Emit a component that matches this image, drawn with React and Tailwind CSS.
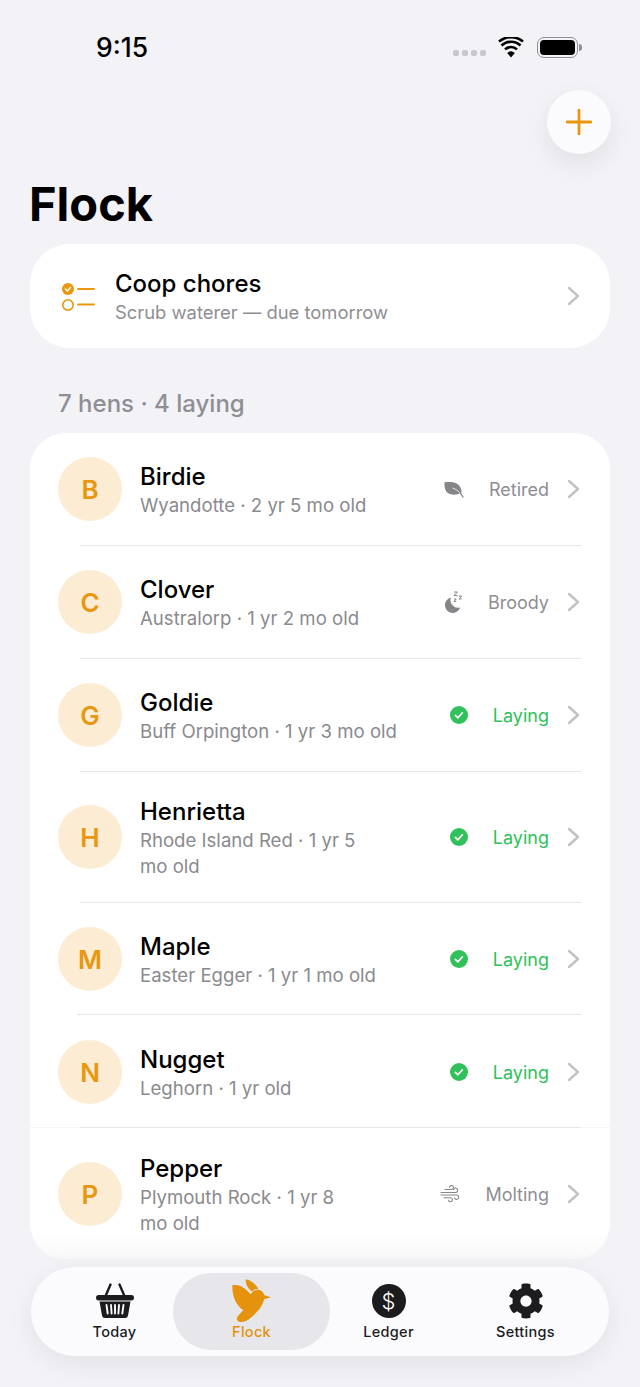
import React from 'react';
import { FaCog } from 'react-icons/fa';

const hens = [
  { name: 'Birdie', meta: 'Wyandotte · 2 yr 5 mo old', status: 'Retired' },
  { name: 'Clover', meta: 'Australorp · 1 yr 2 mo old', status: 'Broody' },
  { name: 'Goldie', meta: 'Buff Orpington · 1 yr 3 mo old', status: 'Laying' },
  { name: 'Henrietta', meta: 'Rhode Island Red · 1 yr 5 mo\u00a0old', status: 'Laying' },
  { name: 'Maple', meta: 'Easter Egger · 1 yr 1 mo old', status: 'Laying' },
  { name: 'Nugget', meta: 'Leghorn · 1 yr old', status: 'Laying' },
  { name: 'Pepper', meta: 'Plymouth Rock · 1 yr 8 mo\u00a0old', status: 'Molting' },
];

function Chevron() {
  return (
    <svg width="13" height="20" viewBox="0 0 13 20" className="shrink-0">
      <path d="M2 2l9 8-9 8" fill="none" stroke="#c2c2c6" strokeWidth="2.4" strokeLinecap="round" strokeLinejoin="round" />
    </svg>
  );
}

function StatusIcon({ status }) {
  if (status === 'Laying') {
    return (
      <svg width="18" height="18" viewBox="0 0 18 18">
        <circle cx="9" cy="9" r="9" fill="#30c15a" />
        <path d="M5.4 9.3l2.5 2.5 4.5-5" fill="none" stroke="#fff" strokeWidth="1.7" strokeLinecap="round" strokeLinejoin="round" />
      </svg>
    );
  }
  if (status === 'Retired') {
    return (
      <svg width="20" height="17" viewBox="0 0 20 17">
        <path d="M.6 1.200C6 .6 14.500 0 17 8c.5 1.500 .5 2.800 .3 4C12 14.500 2.800 15 1 7.500 .4 5 .4 3 .6 1.200z" fill="#858589" />
        <path d="M8.500 7c3.500 1 6.500 3.500 8.500 6.500" fill="none" stroke="#fff" strokeWidth=".8" />
        <path d="M16.500 12l2.500 4" fill="none" stroke="#858589" strokeWidth="1.400" strokeLinecap="round" />
      </svg>
    );
  }
  if (status === 'Broody') {
    return (
      <svg width="20" height="22" viewBox="0 0 20 22" fill="#858589">
        <path d="M8 6.500a7.600 7.600 0 0 0 9.200 10A7.800 7.800 0 1 1 8 6.500z" />
        <path d="M11 1h3.400L11 4.600h3.400M16 5h2.800L16 8h2.800M11 8h2.200L11 10.400h2.200" fill="none" stroke="#858589" strokeWidth="1" />
      </svg>
    );
  }
  return (
    <svg width="20" height="18" viewBox="0 0 20 18" fill="none" stroke="#858589" strokeWidth="1.100" strokeLinecap="round">
      <path d="M5 4.500h6.500a2 2 0 1 0-2-2.300" />
      <path d="M1 7.500h14.500a2.200 2.200 0 1 0-2-3" />
      <path d="M1 10h15.500a2.200 2.200 0 1 1-2 3" />
      <path d="M4 12.800h6.500a2 2 0 1 1-2 2.400" />
    </svg>
  );
}

function HenRow({ hen }) {
  const laying = hen.status === 'Laying';
  return (
    <div className="flex items-center py-6 pl-[28px] pr-[30px]">
      <div className="flex h-16 w-16 shrink-0 items-center justify-center rounded-full bg-[#fcecd3] text-[26px] font-semibold text-[#e8970f]">
        {hen.name[0]}
      </div>
      <div className="ml-[18px] min-w-0 flex-1 translate-y-px pr-[50px]">
        <div className="text-[24px] leading-[30px] font-medium text-black">{hen.name}</div>
        <div className="text-[18.6px] leading-[26px] text-[#8a8a8e]">{hen.meta}</div>
      </div>
      <StatusIcon status={hen.status} />
      <span className={`ml-[25px] text-[18px] ${laying ? 'text-[#30c15a]' : 'text-[#8e8e93]'}`}>
        {hen.status}
      </span>
      <div className="ml-[18px] flex">
        <Chevron />
      </div>
    </div>
  );
}

function TabLabel({ children, active }) {
  return (
    <span className={`mt-1 text-[14.5px] leading-[18px] font-medium tracking-[0.3px] ${active ? 'text-[#e5920d]' : 'text-[#1c1c1e]'}`}>
      {children}
    </span>
  );
}

export default function App() {
  return (
    <div className="h-[1387px] w-[640px] overflow-hidden bg-[#f2f2f7] font-['Inter',sans-serif]">
      {/* Status bar */}
      <div className="flex h-[90px] items-start justify-between pt-[31px] pl-[96px] pr-[58px]">
        <span className="text-[26.5px] leading-8 font-medium text-black">9:15</span>
        <div className="flex items-center pt-[6px]">
          <div className="mt-[10px] mr-[12px] flex gap-[3px]">
            {[0, 1, 2, 3].map((i) => (
              <div key={i} className="h-[6px] w-[6px] rounded-[2px] bg-[#c8c8cc]" />
            ))}
          </div>
          <svg width="26" height="21" viewBox="0 0 26 21" className="mr-[13px]">
            <path d="M13 20.500l-3.800-4.600a6 6 0 0 1 7.600 0z" fill="#000" />
            <path d="M3.500 9.500a14 14 0 0 1 19 0M7 13.400a8.800 8.800 0 0 1 12 0M1 5.600a18.500 18.500 0 0 1 24 0" fill="none" stroke="#000" strokeWidth="2.600" transform="translate(0 -1)" />
          </svg>
          <div className="flex items-center">
            <div className="h-[21px] w-[41px] rounded-[7px] border-[1.5px] border-[#8e8e93] p-[2px]">
              <div className="h-full w-full rounded-[4px] bg-black" />
            </div>
            <div className="ml-[1px] h-[7px] w-[3px] rounded-r-sm bg-[#8e8e93]" />
          </div>
        </div>
      </div>

      {/* Add button */}
      <div className="flex justify-end pr-[29px]">
        <button className="flex h-16 w-16 items-center justify-center rounded-full bg-[#fbfbfd] shadow-[0_10px_28px_rgba(0,0,0,0.08)]">
          <svg width="26" height="26" viewBox="0 0 26 26">
            <path d="M13 1v24M1 13h24" stroke="#e8970f" strokeWidth="2.800" strokeLinecap="round" />
          </svg>
        </button>
      </div>

      <h1 className="mt-[23px] mb-[13px] pl-[29px] text-[47px] leading-[54px] font-bold text-black">Flock</h1>

      {/* Chores card */}
      <div className="mx-[30px] flex h-[104px] items-center rounded-[40px] bg-white pl-[31px] pr-[30px]">
        <svg width="36" height="30" viewBox="0 0 36 30" className="shrink-0">
          <circle cx="7" cy="8" r="6" fill="#e8970f" />
          <path d="M4.400 8l2 2 3.200-3.600" fill="none" stroke="#fff" strokeWidth="1.400" strokeLinecap="round" strokeLinejoin="round" />
          <circle cx="7" cy="24" r="5.200" fill="none" stroke="#e8970f" strokeWidth="1.600" />
          <path d="M17 8h16M17 23.500h16" stroke="#e8970f" strokeWidth="1.800" strokeLinecap="round" />
        </svg>
        <div className="ml-[18px] flex-1 translate-y-px">
          <div className="text-[24px] leading-[30px] font-medium text-black">Coop chores</div>
          <div className="mt-px text-[18.4px] leading-[25px] text-[#8e8e93]">Scrub waterer — due tomorrow</div>
        </div>
        <Chevron />
      </div>

      <div className="mt-10 mb-[13px] pl-[58px] text-[24px] leading-8 font-medium text-[#8e8e93]">7 hens · 4 laying</div>

      {/* Hen list */}
      <div className="mx-[30px] rounded-[36px] bg-white">
        {hens.map((hen, i) => (
          <div key={hen.name} className={i === hens.length - 1 ? 'rounded-b-[36px] bg-gradient-to-b from-white from-80% to-[#f8f8fa]' : ''}>
            <HenRow hen={hen} />
            {hen.name === 'Nugget' && (
              <div className="h-px -translate-y-px bg-[#f6f6f8] pr-[29px] pl-[50px]">
                <div className="h-px bg-[#e6e6ea]" />
              </div>
            )}
            {hen.name === 'Maple' && <div className="mr-[29px] ml-[47px] h-px -translate-y-px bg-[#e6e6ea]" />}
            {i < 4 && <div className="mr-[29px] ml-[50px] h-px bg-[#e6e6ea]" />}
          </div>
        ))}
      </div>

      {/* Tab bar */}
      <div className="mx-[31px] mt-2 grid h-[89px] grid-cols-4 items-start rounded-[44px] bg-[#fbfbfe] px-[15px] pt-[6px] shadow-[0_8px_30px_rgba(0,0,0,0.07)]">
        <div className="flex flex-col items-center pt-[10px]">
          <svg width="38" height="36" viewBox="0 0 38 36" fill="#1c1c1e">
            <path d="M10 12L14.500 1.500M28 12L23.500 1.500" stroke="#1c1c1e" strokeWidth="2.400" strokeLinecap="round" />
            <rect x="0" y="12" width="38" height="5.500" rx="2.700" />
            <path d="M3.500 18.500h31l-2.500 14a3 3 0 0 1-3 2.500H9a3 3 0 0 1-3-2.500z" />
            <path d="M10.500 22l1.200 8.500M15 22l.6 8.500M19 22v8.500M23 22l-.6 8.500M27.500 22l-1.200 8.500" stroke="#fbfbfe" strokeWidth="1.900" strokeLinecap="round" />
          </svg>
          <TabLabel>Today</TabLabel>
        </div>
        <div className="-mx-[10px] flex h-[77px] flex-col items-center rounded-[38px] bg-[#e6e6eb] pt-[10px]">
          <svg width="45" height="45" viewBox="625 85 135 135" fill="#e5920d" className="-mt-[5px] -mb-[4px] shrink-0">
            <path d="M635 107C655 103 672 113 690 134C696 123 708 118 717 121C724 123 729 130 731 137L751 143L730 149C727 168 712 186 692 203C684 211 668 220 656 216C648 213 646 206 652 199L668 181C648 170 634 140 635 107z" />
            <path d="M675 89C692 92 706 104 713 118C705 117 698 120 694 126C684 118 674 106 675 89z" />
          </svg>
          <TabLabel active>Flock</TabLabel>
        </div>
        <div className="flex flex-col items-center pt-[10px]">
          <div className="flex h-9 items-center">
            <div className="flex h-[34px] w-[34px] items-center justify-center rounded-full bg-[#1c1c1e] text-[22px] leading-none font-light text-white">$</div>
          </div>
          <TabLabel>Ledger</TabLabel>
        </div>
        <div className="flex flex-col items-center pt-[10px]">
          <FaCog className="text-[#1c1c1e]" size={36} />
          <TabLabel>Settings</TabLabel>
        </div>
      </div>
    </div>
  );
}
